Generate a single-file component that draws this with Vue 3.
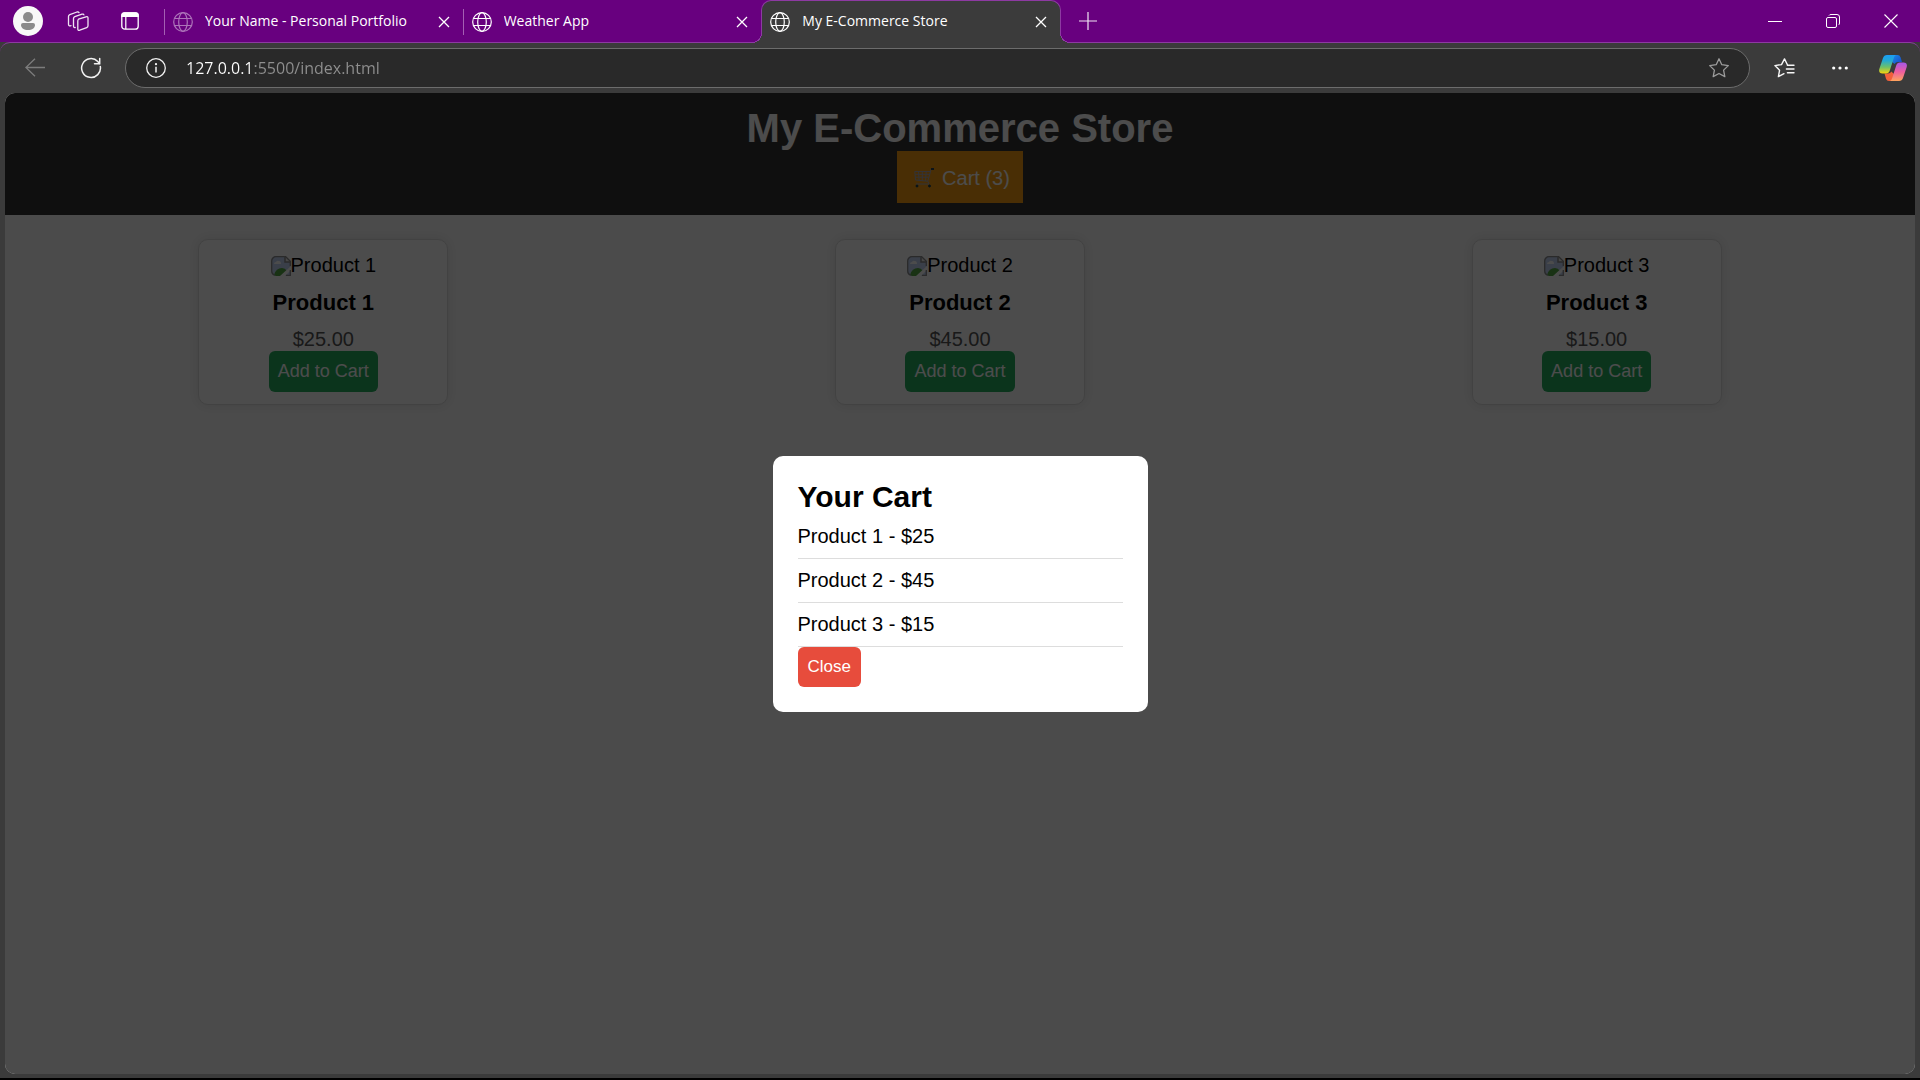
<script setup>
import { ref } from 'vue'

const tabs = [
  { title: 'Your Name - Personal Portfolio', active: false, dim: true },
  { title: 'Weather App', active: false },
  { title: 'My E-Commerce Store', active: true }
]

const products = [
  { name: 'Product 1', price: 25 },
  { name: 'Product 2', price: 45 },
  { name: 'Product 3', price: 15 }
]

const url = ref('127.0.0.1:5500/index.html')
const cart = ref([...products])
const cartOpen = ref(true)
</script>

<template>
  <div class="browser">
    <div class="titlebar">
      <button class="chrome-btn profile" aria-label="Profile">
        <svg width="30" height="30" viewBox="0 0 30 30">
          <circle cx="15" cy="15" r="15" fill="#f8f8f8" />
          <circle cx="15" cy="11" r="5" fill="#8b8b8b" />
          <path d="M10 17h10a2 2 0 0 1 2 2c0 3-3 5-7 5s-7-2-7-5a2 2 0 0 1 2-2z" fill="#8b8b8b" />
        </svg>
      </button>
      <button class="chrome-btn" aria-label="Workspaces">
        <svg width="22" height="22" viewBox="0 0 22 22" fill="none" stroke="#f0e4f3" stroke-width="1.3" stroke-linejoin="round" stroke-linecap="round">
          <path d="M11.5 9.2 19 6.8q2-.6 2 1.2v7.8q0 1.400-1.300 1.900l-6.900 2.500q-2 .6-2-1.300V11q0-1.400 .7-1.800z" />
          <path d="M8.200 17.500q-1.700.4-1.700-1.400V8.500q0-1.300 1.300-1.800L15 4.200q1.500-.5 1.900.7" />
          <path d="M4 15.600q-2.500.8-2.500-1.300V6.500q0-1.300 1.300-1.800L10 2q1.500-.4 2 .6" />
        </svg>
      </button>
      <button class="chrome-btn" aria-label="Tab actions">
        <svg width="20" height="20" viewBox="0 0 20 20">
          <rect x="1.800" y="1.800" width="16.400" height="16.400" rx="3" fill="none" stroke="#fff" stroke-width="1.300" />
          <path d="M1.200 6V4.200a3 3 0 0 1 3-3h11.600a3 3 0 0 1 3 3V6z" fill="#fff" />
          <path d="M5.800 6v12" stroke="#fff" stroke-width="1.200" />
        </svg>
      </button>

      <div class="tabs" role="tablist">
        <div v-for="tab in tabs" :key="tab.title" class="tab" :class="{ active: tab.active }" role="tab" :aria-selected="tab.active">
          <svg class="globe" :class="{ dim: tab.dim }" width="20" height="20" viewBox="0 0 20 20" fill="none" stroke="#fff" stroke-width="1.200">
            <circle cx="10" cy="10" r="9.300" />
            <ellipse cx="10" cy="10" rx="4.300" ry="9.300" />
            <path d="M1.500 6.500h17M1.500 13.500h17" />
          </svg>
          <span class="tab-title">{{ tab.title }}</span>
          <button class="tab-close" :aria-label="'Close tab ' + tab.title">
            <svg width="12" height="12" viewBox="0 0 12 12" stroke="#fff" stroke-width="1.300"><path d="M1 1l10 10M11 1 1 11" /></svg>
          </button>
        </div>
      </div>
      <button class="chrome-btn new-tab" aria-label="New tab">
        <svg width="18" height="18" viewBox="0 0 18 18" stroke="#f0e4f3" stroke-width="1.200"><path d="M9 0v18M0 9h18" /></svg>
      </button>

      <div class="window-controls">
        <button aria-label="Minimize">
          <svg width="14" height="14" viewBox="0 0 14 14" stroke="#fff"><path d="M0 7.500h14" /></svg>
        </button>
        <button aria-label="Restore">
          <svg width="14" height="14" viewBox="0 0 14 14" fill="none" stroke="#fff">
            <rect x=".5" y="3.500" width="10" height="10" rx="1.500" />
            <path d="M3 1.500Q3.500.5 5 .5h6q2.500 0 2.500 2.500v6q0 1.500-1 2" />
          </svg>
        </button>
        <button aria-label="Close window">
          <svg width="14" height="14" viewBox="0 0 14 14" stroke="#fff" stroke-width="1.100"><path d="M.5.5l13 13M13.500.5l-13 13" /></svg>
        </button>
      </div>
    </div>

    <div class="toolbar">
      <button class="tool" aria-label="Back">
        <svg width="20" height="20" viewBox="0 0 20 20" fill="none" stroke="#7c7c7c" stroke-width="1.300"><path d="M20 9.500H.8M10 .8.900 9.500l9.100 8.800" /></svg>
      </button>
      <button class="tool" aria-label="Refresh">
        <svg width="22" height="22" viewBox="0 0 22 22" fill="none" stroke="#f2f2f2" stroke-width="1.500" stroke-linecap="round">
          <path d="M20.300 9.400A9.400 9.400 0 1 1 17.800 4.500l1.500 1.900" /><path d="M19.700 1.500v5.200h-5.200" />
        </svg>
      </button>
      <div class="address">
        <svg width="20" height="20" viewBox="0 0 20 20" fill="none" stroke="#f2f2f2" stroke-width="1.300">
          <circle cx="10" cy="10" r="9.300" /><path d="M10 8.800V14.500" stroke-width="1.500" /><circle cx="10" cy="6.200" r=".5" fill="#fff" />
        </svg>
        <input v-model="url" class="url" type="text" aria-label="Address" spellcheck="false" />
        <button class="favorite" aria-label="Add to favorites">
          <svg width="20" height="20" viewBox="0 0 20 20" fill="none" stroke="#9c9c9c" stroke-width="1.300" stroke-linejoin="round">
            <path d="M10 .8l2.800 5.900 6.500.9-4.700 4.500 1.200 6.500L10 15.500l-5.800 3.100 1.200-6.500L.7 7.600l6.500-.9z" />
          </svg>
        </button>
      </div>
      <button class="tool" aria-label="Favorites">
        <svg width="21" height="20" viewBox="0 0 21 20" fill="none" stroke="#f7f7f7" stroke-width="1.400" stroke-linejoin="round" stroke-linecap="round">
          <path d="M13.400 6.700 10.500.9 7.500 6.600.9 7.600l4.700 4.600-1.200 6.400L10 15.700" />
          <path d="M13.400 7.200H20M12.400 11H20M13.400 14.800H20" />
        </svg>
      </button>
      <button class="tool" aria-label="Settings and more">
        <svg width="16" height="4" viewBox="0 0 16 4" fill="#fff"><circle cx="1.700" cy="2" r="1.600" /><circle cx="8" cy="2" r="1.600" /><circle cx="14.300" cy="2" r="1.600" /></svg>
      </button>
      <button class="tool copilot" aria-label="Copilot">
        <svg width="28" height="26" viewBox="0 0 28 26">
          <defs>
            <linearGradient id="cp-left" x1="0" y1="0" x2="0" y2="1"><stop offset="0" stop-color="#1b9df5" /><stop offset=".3" stop-color="#22a9d4" /><stop offset=".65" stop-color="#6cc06a" /><stop offset="1" stop-color="#f6d30c" /></linearGradient>
            <linearGradient id="cp-right" x1="0" y1="0" x2="0" y2="1"><stop offset="0" stop-color="#a457e8" /><stop offset=".5" stop-color="#ee5da0" /><stop offset="1" stop-color="#ffa45c" /></linearGradient>
            <linearGradient id="cp-top" x1="0" y1="0" x2="1" y2="1"><stop offset="0" stop-color="#1a8bea" /><stop offset="1" stop-color="#1747c4" /></linearGradient>
          </defs>
          <path d="M14 0h4.500q2.300 0 3 2.300L23 7h-4q-2.500 0-3.300 2L13 7z" fill="url(#cp-top)" />
          <path d="M14 26H10q-2.300 0-3-2.300L5.500 18.500H9q2.500 0 3.300-2L15 19z" fill="#f2603a" />
          <path d="M8 0h9q-1.500.6-2.200 3l-4 12.500q-.9 3-3.800 3H3.500Q-.7 18.500.3 14L4 3Q5 0 8 0z" fill="url(#cp-left)" />
          <path d="M20 26h-9q1.500-.6 2.200-3l4-12.500q.9-3 3.800-3h3.500q4.200 0 3.200 4.500L24 23q-1 3-4 3z" fill="url(#cp-right)" />
        </svg>
      </button>
    </div>

    <div class="viewport">
      <header class="store-header">
        <h1>My E-Commerce Store</h1>
        <button class="cart-btn" @click="cartOpen = true">
          <svg width="20" height="20" viewBox="0 0 20 20" fill="none" stroke="#a9a9b8">
            <path d="M19.500 1h-2.300l-3.400 12.200L1.500 12 .8 3.500h15.700M1 6.300h14.800M1.200 9.200h13.700M4.500 3.500l.6 8.800M8.300 3.500v9.200M12.200 3.500l-.7 9.400M13.800 13.200l1.200 2.800H2" />
            <path d="M17 1h3" stroke="#2b4250" stroke-width="2" />
            <circle cx="3" cy="18" r="1" fill="#153e52" stroke="#153e52" /><circle cx="15.500" cy="18" r="1" fill="#153e52" stroke="#153e52" />
          </svg>
          <span>Cart ({{ cart.length }})</span>
        </button>
      </header>

      <main class="products">
        <article v-for="p in products" :key="p.name" class="card">
          <div class="picture">
            <svg width="20" height="20" viewBox="0 0 20 20">
              <path d="M5 0h9l6 6v14H5a5 5 0 0 1-5-5V5a5 5 0 0 1 5-5z" fill="#c2d3f3" />
              <path d="M3 8q0-2 2-2 1-2 3-1 2 0 2 3z" fill="#fff" />
              <path d="M3 19q2-7 8-7 3 0 5 3l-5 5H5z" fill="#54a744" />
              <path d="M9 20 20 10v4l-6 6z" fill="#fff" />
              <path d="M14 0v6h6" fill="#eee" stroke="#8e8e8e" stroke-width="1.500" />
              <path d="M13.500.7H5A4.300 4.300 0 0 0 .7 5v10q0 3 3 4.300M14 0l6 6M19.300 6v4M19.300 14v5.300H15" fill="none" stroke="#8e8e8e" stroke-width="1.300" />
            </svg>
            <span>{{ p.name }}</span>
          </div>
          <h3>{{ p.name }}</h3>
          <p>${{ p.price.toFixed(2) }}</p>
          <button class="add-btn" @click="cart.push(p)">Add to Cart</button>
        </article>
      </main>

      <div v-if="cartOpen" class="overlay">
        <section class="modal" role="dialog" aria-labelledby="cart-title">
          <h2 id="cart-title">Your Cart</h2>
          <ul>
            <li v-for="(item, i) in cart" :key="i">{{ item.name }} - ${{ item.price }}</li>
          </ul>
          <button class="close-btn" @click="cartOpen = false">Close</button>
        </section>
      </div>
    </div>
  </div>
</template>

<style>
body {
  background: #3b3b3b;
}
</style>

<style scoped>
* {
  box-sizing: border-box;
  margin: 0;
  padding: 0;
}

button {
  border: none;
  background: none;
  font-family: inherit;
  color: inherit;
  cursor: pointer;
}

svg {
  display: block;
  flex: none;
}

.browser {
  display: flex;
  flex-direction: column;
  min-height: 100vh;
  background: #3b3b3b;
  border-bottom: 2px solid #000;
  font-family: "Open Sans", "Noto Sans", sans-serif;
  color: #fff;
}

.titlebar {
  display: flex;
  height: 42px;
  background: #68007f;
}

.chrome-btn {
  display: flex;
  align-items: center;
  justify-content: center;
  flex: none;
  width: 52px;
}

.profile {
  padding-left: 4px;
}

.chrome-btn.new-tab {
  width: 54px;
}

.tabs {
  display: flex;
  flex: 0 1 897px;
  min-width: 0;
  margin-left: 8px;
}

.tab {
  position: relative;
  display: flex;
  align-items: center;
  flex: 1 1 0;
  min-width: 0;
  height: 43px;
  padding: 0 13px 0 9px;
}

.tab:not(.active)::before {
  content: "";
  position: absolute;
  left: 0;
  top: 9px;
  width: 1px;
  height: 26px;
  background: #a45fb3;
}

.tab.active {
  z-index: 1;
  background: #3b3b3b;
  border: 1px solid #8d3aa2;
  border-bottom: none;
  border-radius: 10px 10px 0 0;
  padding-left: 8px;
}

.tab.active::before,
.tab.active::after {
  content: "";
  position: absolute;
  bottom: 0;
  width: 10px;
  height: 10px;
}

.tab.active::before {
  left: -10px;
  background: radial-gradient(circle at 0 0, #68007f 9px, #8d3aa2 9px 10px, #3b3b3b 10px);
}

.tab.active::after {
  right: -10px;
  background: radial-gradient(circle at 100% 0, #68007f 9px, #8d3aa2 9px 10px, #3b3b3b 10px);
}

.globe.dim {
  opacity: 0.45;
}

.tab-title {
  flex: 1;
  min-width: 0;
  margin-left: 12px;
  padding-bottom: 2px;
  overflow: hidden;
  white-space: nowrap;
  font-size: 14px;
  line-height: 20px;
}

.tab-close {
  flex: none;
  width: 12px;
  height: 12px;
}

.window-controls {
  display: flex;
  margin-left: auto;
}

.window-controls button {
  display: flex;
  align-items: center;
  justify-content: center;
  width: 58px;
}

.toolbar {
  display: flex;
  align-items: center;
  gap: 12px;
  height: 51px;
  padding: 0 8px 0 13px;
  border-top: 1px solid #8d3aa2;
  border-radius: 10px 10px 0 0;
}

.tool {
  display: flex;
  align-items: center;
  justify-content: center;
  flex: none;
  width: 44px;
  height: 40px;
}

.copilot {
  width: 38px;
}

.address {
  display: flex;
  align-items: center;
  flex: 1;
  min-width: 0;
  height: 40px;
  padding: 0 20px;
  border: 1px solid #6c6c6c;
  border-radius: 20px;
  background: #292929;
}

.url {
  flex: 1;
  min-width: 0;
  margin-left: 20px;
  border: none;
  outline: none;
  background: linear-gradient(to right, #fff 67px, #8f8f8f 67px);
  -webkit-background-clip: text;
  background-clip: text;
  color: transparent;
  font-family: inherit;
  font-size: 16px;
  line-height: 24px;
}

.viewport {
  position: relative;
  flex: 1;
  margin: 0 5px 4px;
  overflow: hidden;
  border-radius: 10px;
  background: #fbfbfb;
  color: #000;
  font-family: "Liberation Sans", Arial, sans-serif;
  font-size: 20px;
  line-height: 23px;
}

.store-header {
  display: flex;
  flex-direction: column;
  align-items: center;
  padding: 12px;
  background: #333;
  color: #fff;
}

h1 {
  font-size: 40px;
  line-height: 46px;
}

.cart-btn {
  display: flex;
  align-items: center;
  gap: 8px;
  height: 52px;
  padding: 2px 13px 0 17px;
  background: #f39c12;
  color: #fff;
  font-size: 20px;
}

.products {
  display: flex;
  justify-content: space-around;
  padding: 24px 0;
}

.card {
  display: flex;
  flex-direction: column;
  align-items: center;
  width: 250px;
  padding: 14px 12px 12px;
  border: 1px solid #ddd;
  border-radius: 10px;
  background: #fff;
  box-shadow: 0 0 12px rgba(0, 0, 0, 0.1);
}

.picture {
  display: flex;
  align-items: center;
}

h3 {
  margin: 12px 0;
  font-size: 22px;
  line-height: 27px;
}

.card p {
  color: #555;
}

.add-btn {
  height: 41px;
  padding: 0 9px;
  border-radius: 6px;
  background: #27ae60;
  color: #fff;
  font-size: 18px;
}

.overlay {
  position: absolute;
  inset: 0;
  display: flex;
  align-items: center;
  justify-content: center;
  background: rgba(0, 0, 0, 0.7);
}

.modal {
  width: 375px;
  padding: 25px;
  border-radius: 10px;
  background: #fff;
}

h2 {
  margin-bottom: 2px;
  font-size: 30px;
  line-height: 32px;
}

ul {
  list-style: none;
}

li {
  padding: 10px 0;
  border-bottom: 1px solid #ddd;
}

.close-btn {
  display: block;
  height: 40px;
  padding: 0 10px;
  border-radius: 6px;
  background: #e74c3c;
  color: #fff;
  font-size: 17px;
}
</style>
